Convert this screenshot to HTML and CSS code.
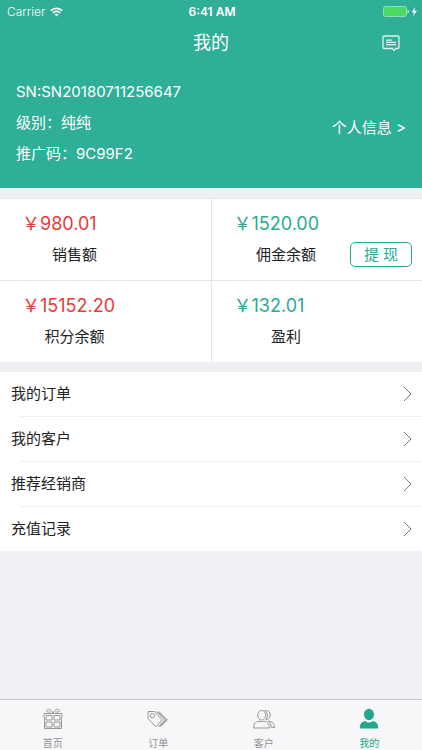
FILE: index.html
```html
<!DOCTYPE html>
<html lang="zh-CN">
<head>
<meta charset="utf-8">
<meta name="viewport" content="width=device-width, initial-scale=1">
<title>我的</title>
<link rel="stylesheet" href="styles.css">
</head>
<body>
<div class="app">
  <header class="header">
    <div class="status">
      <div class="carrier">
        <span>Carrier</span>
        <svg width="13" height="10" viewBox="0 0 13 10" fill="none" stroke="#fff" stroke-width="1.7"><path d="M.8 3.7C4 .5 9 .5 12.2 3.7M2.9 5.9C5 3.9 8 3.9 10.1 5.9"/><path d="M4.5 7.3Q6.5 5.7 8.5 7.3L6.5 9.4Z" fill="#fff" stroke="none"/></svg>
      </div>
      <span class="clock">6:41 AM</span>
      <svg class="battery" width="34" height="12" viewBox="0 0 34 12"><rect x=".5" y=".5" width="23" height="10" rx="2" fill="#4cd964" stroke="#8fe0b4"/><path d="M24.5 3.8q1.5.2 1.5 1.8t-1.5 1.8z" fill="#b5e8d5"/><path d="M32.4 1L28.5 6.2H31L29.8 10.2L34 4.8H31.4Z" fill="#fff"/></svg>
    </div>
    <div class="navbar">
      <h1>我的</h1>
      <button class="message" type="button" aria-label="消息">
        <svg width="18" height="17" viewBox="0 0 18 17" fill="none" stroke="#d8f5ec" stroke-width="1.3"><path d="M2.2 1H15.8Q17 1 17 2.2V12.3Q17 13.5 15.8 13.5H13.8L12 15.4L10.2 13.5H2.2Q1 13.5 1 12.3V2.2Q1 1 2.2 1Z"/><path d="M4 5.1H10M4 7.4H14M4 9.7H14"/></svg>
      </button>
    </div>
    <div class="profile">
      <div class="details">
        <p>SN:SN20180711256647</p>
        <p>级别：纯纯</p>
        <p>推广码：9C99F2</p>
      </div>
      <a class="info" href="#info">个人信息 &gt;</a>
    </div>
  </header>
  <main>
    <section class="stats">
      <div class="stat red"><div class="figure"><strong>￥980.01</strong><span>销售额</span></div></div>
      <div class="stat green"><div class="figure"><strong>￥1520.00</strong><span>佣金余额</span></div><button class="withdraw" type="button">提 现</button></div>
      <div class="stat red"><div class="figure"><strong>￥15152.20</strong><span>积分余额</span></div></div>
      <div class="stat green"><div class="figure"><strong>￥132.01</strong><span>盈利</span></div></div>
    </section>
    <nav class="menu">
      <a href="#orders">我的订单<svg width="9" height="16" viewBox="0 0 9 16"><path d="M1 1L8 8L1 15"/></svg></a>
      <a href="#customers">我的客户<svg width="9" height="16" viewBox="0 0 9 16"><path d="M1 1L8 8L1 15"/></svg></a>
      <a href="#dealers">推荐经销商<svg width="9" height="16" viewBox="0 0 9 16"><path d="M1 1L8 8L1 15"/></svg></a>
      <a href="#recharge">充值记录<svg width="9" height="16" viewBox="0 0 9 16"><path d="M1 1L8 8L1 15"/></svg></a>
    </nav>
  </main>
  <nav class="tabs">
    <a href="#home">
      <svg width="24" height="22" viewBox="0 0 24 22"><path d="M3 5.5H21V9.5H20.5V20.5H3.5V9.5H3ZM5 7.5H11V12H5ZM13 7.5H19V12H13ZM5 14H11V19H5ZM13 14H19V19H13ZM12 5C10 1 6 .5 5.5 2.5C5 4.5 8 4 9.5 4M12 5C14 1 18 .5 18.5 2.5C19 4.5 16 4 14.5 4"/></svg>
      <span>首页</span>
    </a>
    <a href="#order">
      <svg width="24" height="22" viewBox="0 0 24 22"><path d="M2 3.5H8.5L16 12L9.8 18.8L2 10.5Z"/><circle cx="6.3" cy="7.7" r="2.2"/><path d="M10.5 3.5L18.5 12L12.5 18.8M13 3.5L21.5 12L14.5 18.8M11.7 3.5L20 12L13.5 18.8"/></svg>
      <span>订单</span>
    </a>
    <a href="#clients">
      <svg width="24" height="22" viewBox="0 0 24 22"><ellipse cx="9.7" cy="7.2" rx="4" ry="4.8"/><path d="M13 2.7C20 .8 19.5 12.7 14 11.4Q17.5 7 13 2.7M1.7 20C1.5 15.5 3.5 13.5 7 13.3Q9.5 14.5 12 13.3C16 13.5 17.3 16 17.2 20ZM16.5 13.3C20.5 13.3 22.5 15.5 22.4 19.5H19.2C19 16.5 18.4 15 16.5 13.3Z"/></svg>
      <span>客户</span>
    </a>
    <a class="active" href="#me">
      <svg width="24" height="22" viewBox="0 0 24 22"><ellipse cx="12" cy="6.5" rx="5" ry="5.8"/><path d="M2.8 20.5C2.8 16 4 14 8 13Q12 16 16 13C20 14 21.2 16 21.2 20.5Z"/></svg>
      <span>我的</span>
    </a>
  </nav>
</div>
</body>
</html>
```
FILE: styles.css
```css
* {
  box-sizing: border-box;
}

body {
  margin: 0;
  background: #efeff4;
  color: #222;
  font: 400 15px/24px Inter, "Noto Sans CJK SC", sans-serif;
}

h1,
p {
  margin: 0;
  font-weight: inherit;
}

a {
  color: inherit;
  text-decoration: none;
}

button {
  padding: 0;
  border: 0;
  background: none;
  color: inherit;
  font: inherit;
}

svg {
  display: block;
}

.app {
  display: flex;
  flex-direction: column;
  min-height: 100vh;
}

.header {
  padding-bottom: 19px;
  background: #2fae98;
  color: #fff;
}

.status {
  display: grid;
  grid-template-columns: 1fr auto 1fr;
  align-items: center;
  height: 22px;
  padding: 0 5px 0 7px;
  font-size: 12px;
}

.carrier {
  display: flex;
  align-items: center;
  gap: 5px;
  font-weight: 300;
}

.clock {
  font-weight: 600;
}

.battery {
  justify-self: end;
}

.navbar {
  display: grid;
  grid-template-columns: 1fr auto 1fr;
  align-items: center;
  height: 42px;
  padding: 0 22px;
}

.navbar h1 {
  grid-column: 2;
  font-size: 18px;
}

.message {
  justify-self: end;
}

.profile {
  display: flex;
  align-items: center;
  justify-content: space-between;
  padding: 12px 16px 0;
}

.details {
  display: grid;
  line-height: 31px;
}

.info {
  padding-top: 10px;
}

.stats {
  display: grid;
  grid-template-columns: 1fr 1fr;
  gap: 1px;
  margin: 10px 0;
  padding-top: 1px;
  background: #e6e6ea;
}

.stat {
  display: flex;
  align-items: flex-end;
  justify-content: space-between;
  height: 81px;
  padding: 13px 10px 13px 22px;
  background: #fff;
}

.figure {
  display: grid;
  gap: 7px;
  min-width: 105px;
  text-align: center;
}

.figure strong {
  font-size: 18px;
  font-weight: 400;
  text-align: left;
}

.red strong {
  color: #e93a3a;
}

.green strong,
.withdraw {
  color: #2aaa92;
}

.withdraw {
  width: 62px;
  height: 25px;
  border: 1px solid #2aaa92;
  border-radius: 5px;
  line-height: 23px;
}

.menu {
  background: #fff;
}

.menu a {
  display: flex;
  align-items: center;
  justify-content: space-between;
  height: 44px;
  padding: 0 10px 0 11px;
}

.menu a + a {
  height: 45px;
  padding-top: 1px;
  background: linear-gradient(#efeff1, #efeff1) 20px 0 / 100% 1px no-repeat;
}

.menu path {
  fill: none;
  stroke: #777;
}

.tabs {
  display: grid;
  grid-template-columns: repeat(4, 1fr);
  height: 51px;
  margin-top: auto;
  border-top: 1px solid #c5c5ca;
  background: #f7f7f9;
  color: #929292;
  font-size: 10px;
  line-height: 14px;
}

.tabs a {
  display: flex;
  flex-direction: column;
  align-items: center;
  gap: 6px;
  padding-top: 8px;
}

.tabs svg {
  fill: none;
  stroke: #999;
}

.tabs .active {
  color: #22a78e;
}

.tabs .active svg {
  fill: #22a78e;
  stroke: none;
}
```
